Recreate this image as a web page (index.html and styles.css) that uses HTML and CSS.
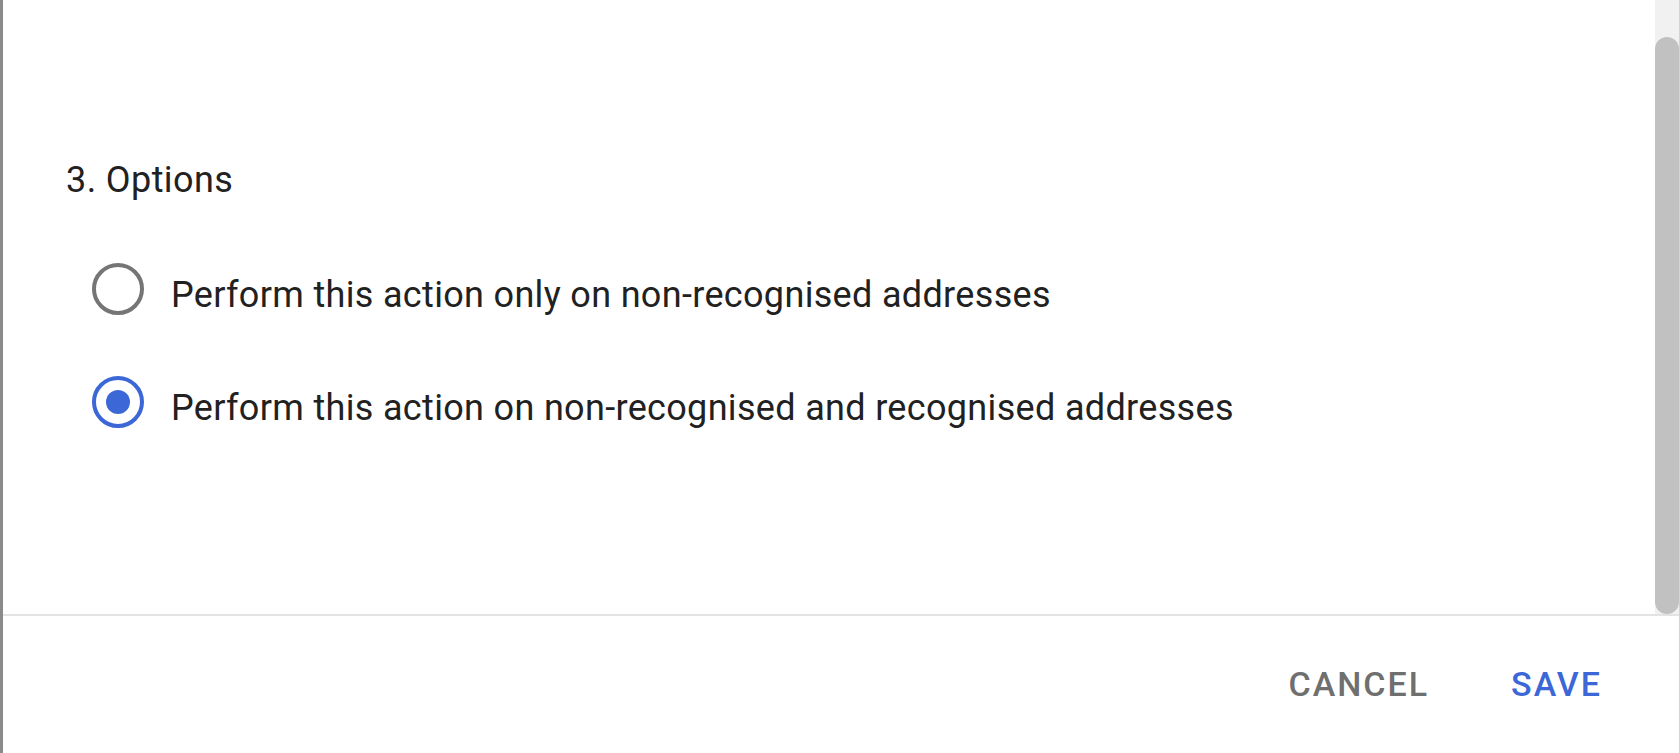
FILE: index.html
```html
<!DOCTYPE html>
<html lang="en">
<head>
    <meta charset="UTF-8">
    <meta name="viewport" content="width=device-width, initial-scale=1.0">
    <title>Options</title>
    <link rel="stylesheet" href="styles.css">
</head>
<body>
    <div class="dialog">
        <div class="dialog-body">
            <main class="content">
                <h2 class="section-title">3. Options</h2>
                <ul class="radio-list">
                    <li class="radio-row">
                        <span class="radio"></span>
                        <span class="radio-label">Perform this action only on non-recognised addresses</span>
                    </li>
                    <li class="radio-row">
                        <span class="radio checked"></span>
                        <span class="radio-label">Perform this action on non-recognised and recognised addresses</span>
                    </li>
                </ul>
            </main>
            <div class="scrollbar">
                <div class="scroll-thumb"></div>
            </div>
        </div>

        <footer class="dialog-footer">
            <button class="btn btn-cancel">CANCEL</button>
            <button class="btn btn-save">SAVE</button>
        </footer>
    </div>
</body>
</html>
```

FILE: styles.css
```css
body, h2, ul {
    margin: 0;
    padding: 0;
}

body {
    font-family: Roboto, "Liberation Sans", Arial, sans-serif;
    color: #212121;
    background-color: #ffffff;
}

.dialog {
    height: 753px;
    border-left: 3px solid #8a8a8a;
    display: flex;
    flex-direction: column;
    box-sizing: border-box;
}

.dialog-body {
    display: flex;
    height: 614px;
}

.content {
    flex: 1;
    padding: 159px 0 0 63px;
}

.scrollbar {
    width: 24px;
    background-color: #f1f1f1;
    padding-top: 37px;
    display: flex;
    box-sizing: border-box;
}

.scroll-thumb {
    flex: 1;
    background-color: #c1c1c1;
    border-radius: 12px;
}

.section-title {
    font-size: 36px;
    font-weight: normal;
    line-height: 42px;
    letter-spacing: 0.4px;
    margin-bottom: 62px;
}

.radio-list {
    list-style-type: none;
    padding-left: 26px;
}

.radio-row {
    display: flex;
    align-items: flex-start;
    margin-bottom: 60px;
}

.radio {
    width: 52px;
    height: 52px;
    border: 4px solid #757575;
    border-radius: 50%;
    box-sizing: border-box;
    display: flex;
    align-items: center;
    justify-content: center;
    flex-shrink: 0;
}

.radio.checked {
    border-color: #3c67d6;
}

.radio.checked::after {
    content: "";
    width: 24px;
    height: 24px;
    border-radius: 50%;
    background-color: #3c67d6;
}

.radio-label {
    font-size: 36px;
    line-height: 42px;
    letter-spacing: 0.33px;
    padding-top: 11px;
    margin-left: 27px;
}

.dialog-footer {
    flex: 1;
    border-top: 2px solid #e3e3e3;
    display: flex;
    justify-content: flex-end;
    align-items: flex-start;
    padding: 48px 36px 0 0;
}

.btn {
    font-family: Roboto, "Liberation Sans", Arial, sans-serif;
    font-size: 34px;
    font-weight: 500;
    line-height: 40px;
    letter-spacing: 2px;
    background: none;
    border: none;
    padding: 0 41px;
    cursor: pointer;
}

.btn-cancel {
    color: #6f6f6f;
}

.btn-save {
    color: #3c67d6;
}
```
